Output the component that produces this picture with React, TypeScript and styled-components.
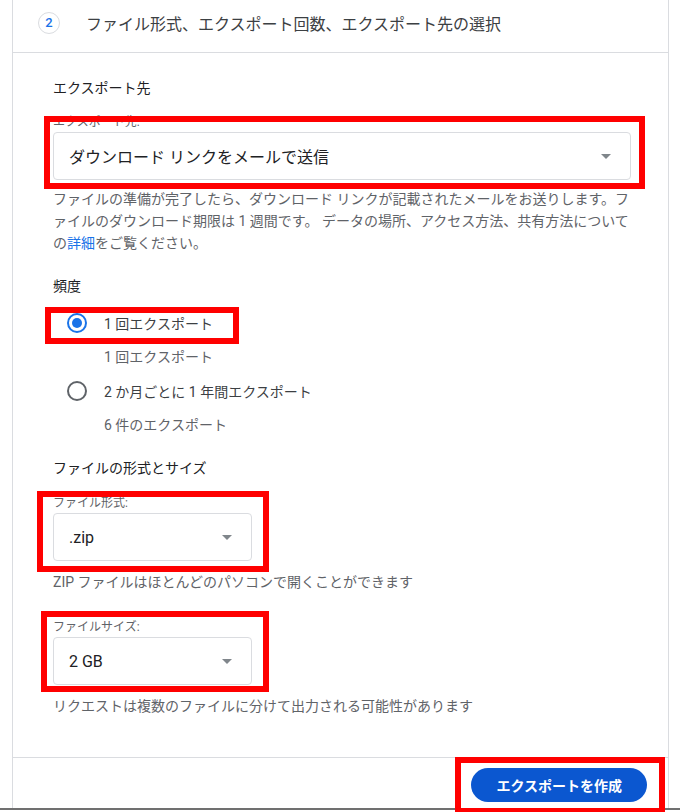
import React from 'react'
import styled, { createGlobalStyle } from 'styled-components'

const GlobalStyle = createGlobalStyle`
  html, body {
    margin: 0;
    padding: 0;
    background: #fff;
  }
  body {
    font-family: Roboto, "Noto Sans CJK JP", "Noto Sans", sans-serif;
  }
`

const Page = styled.div`
  width: 680px;
  height: 812px;
  overflow: hidden;
  display: flex;
  flex-direction: column;
`

const Card = styled.section`
  height: 808px;
  flex-shrink: 0;
  margin: 0 11px 0 12px;
  border-left: 1px solid #dadce0;
  border-right: 1px solid #dadce0;
  display: flex;
  flex-direction: column;
`

const Header = styled.header`
  height: 53px;
  box-sizing: border-box;
  padding: 0 0 7px 25px;
  border-bottom: 1px solid #dadce0;
  display: flex;
  align-items: center;
  gap: 26px;
`

const StepBadge = styled.span`
  width: 22px;
  height: 22px;
  box-sizing: border-box;
  border: 1px solid #dadce0;
  border-radius: 50%;
  display: grid;
  place-items: center;
  color: #1a73e8;
  font-size: 13px;
  font-weight: 500;
`

const Title = styled.h2`
  margin: 0;
  font-size: 16px;
  font-weight: 400;
  color: #3c4043;
`

const Body = styled.div`
  flex: 1;
  padding: 25px 37px 0 40px;
  border-bottom: 1px solid #dadce0;
`

const SectionTitle = styled.h3<{ $gap: number }>`
  margin: ${p => p.$gap}px 0 0;
  font-size: 14px;
  line-height: 20px;
  font-weight: 400;
  color: #202124;
`

const Field = styled.div<{ $gap: number; $width: string }>`
  position: relative;
  width: ${p => p.$width};
  margin-top: ${p => p.$gap}px;
`

const FieldLabel = styled.div`
  font-size: 12px;
  line-height: 16px;
  color: #5f6368;
  margin-bottom: 2px;
`

const Select = styled.div`
  height: 48px;
  box-sizing: border-box;
  border: 1px solid #dadce0;
  border-radius: 4px;
  padding: 0 19px 0 15px;
  display: flex;
  align-items: center;
  justify-content: space-between;
  font-size: 16px;
  color: #202124;
`

const Caret = styled.span`
  width: 0;
  height: 0;
  border-left: 5px solid transparent;
  border-right: 5px solid transparent;
  border-top: 5px solid #80868b;
`

const Help = styled.p<{ $gap: number; $lh: number }>`
  margin: ${p => p.$gap}px 0 0;
  font-size: 14px;
  line-height: ${p => p.$lh}px;
  color: #5f6368;
  white-space: nowrap;

  a {
    color: #1a73e8;
    text-decoration: none;
  }
`

const Option = styled.label<{ $gap: number }>`
  position: relative;
  height: 36px;
  margin-top: ${p => p.$gap}px;
  padding-left: 14px;
  display: flex;
  align-items: center;
  gap: 17px;
  font-size: 14px;
  color: #3c4043;
`

const Radio = styled.span<{ $checked?: boolean }>`
  width: 20px;
  height: 20px;
  box-sizing: border-box;
  border-radius: 50%;
  border: 2px solid ${p => (p.$checked ? '#1a73e8' : '#5f6368')};
  display: grid;
  place-items: center;

  &::after {
    content: '';
    width: 10px;
    height: 10px;
    border-radius: 50%;
    background: ${p => (p.$checked ? '#1a73e8' : 'transparent')};
  }
`

const OptionNote = styled.div`
  margin-top: 6px;
  padding-left: 51px;
  font-size: 14px;
  line-height: 20px;
  color: #5f6368;
`

const Footer = styled.footer`
  height: 50px;
  box-sizing: border-box;
  padding: 10px 21px 0 0;
  display: flex;
  justify-content: flex-end;
  align-items: flex-start;
`

const ButtonWrap = styled.div`
  position: relative;
`

const PrimaryButton = styled.button`
  height: 34px;
  padding: 0 25px;
  border: none;
  border-radius: 17px;
  background: #0b57d0;
  color: #fff;
  font-family: inherit;
  font-size: 14px;
  font-weight: 700;
`

const BottomRule = styled.div`
  height: 2px;
  flex-shrink: 0;
  background: #707070;
`

// red annotation frames drawn over the screenshot
const Highlight = styled.span<{ $inset: string }>`
  position: absolute;
  inset: ${p => p.$inset};
  border: 6px solid #ff0000;
  pointer-events: none;
  z-index: 2;
`

const App: React.FC = () => (
  <Page>
    <GlobalStyle />
    <Card>
      <Header>
        <StepBadge>2</StepBadge>
        <Title>ファイル形式、エクスポート回数、エクスポート先の選択</Title>
      </Header>

      <Body>
        <SectionTitle $gap={0}>エクスポート先</SectionTitle>
        <Field $gap={16} $width="100%">
          <FieldLabel>エクスポート先:</FieldLabel>
          <Select>
            ダウンロード リンクをメールで送信
            <Caret />
          </Select>
          <Highlight $inset="2px -14px -9px -9px" />
        </Field>
        <Help $gap={8} $lh={22}>
          ファイルの準備が完了したら、ダウンロード リンクが記載されたメールをお送りします。フ
          <br />
          ァイルのダウンロード期限は 1 週間です。 データの場所、アクセス方法、共有方法について
          <br />
          の<a href="#">詳細</a>をご覧ください。
        </Help>

        <SectionTitle $gap={22}>頻度</SectionTitle>
        <Option $gap={9}>
          <Radio $checked />
          1 回エクスポート
          <Highlight $inset="2px 392px -3px -8px" />
        </Option>
        <OptionNote>1 回エクスポート</OptionNote>
        <Option $gap={6}>
          <Radio />2 か月ごとに 1 年間エクスポート
        </Option>
        <OptionNote>6 件のエクスポート</OptionNote>

        <SectionTitle $gap={23}>ファイルの形式とサイズ</SectionTitle>
        <Field $gap={17} $width="199px">
          <FieldLabel>ファイル形式:</FieldLabel>
          <Select>
            .zip
            <Caret />
          </Select>
          <Highlight $inset="-4px -17px -11px -16px" />
        </Field>
        <Help $gap={11} $lh={20}>
          ZIP ファイルはほとんどのパソコンで開くことができます
        </Help>
        <Field $gap={27} $width="199px">
          <FieldLabel>ファイルサイズ:</FieldLabel>
          <Select>
            2 GB
            <Caret />
          </Select>
          <Highlight $inset="-8px -17px -7px -12px" />
        </Field>
        <Help $gap={11} $lh={20}>
          リクエストは複数のファイルに分けて出力される可能性があります
        </Help>
      </Body>

      <Footer>
        <ButtonWrap>
          <PrimaryButton>エクスポートを作成</PrimaryButton>
          <Highlight $inset="-11px -18px -12px -16px" />
        </ButtonWrap>
      </Footer>
    </Card>
    <BottomRule />
  </Page>
)

export default App
